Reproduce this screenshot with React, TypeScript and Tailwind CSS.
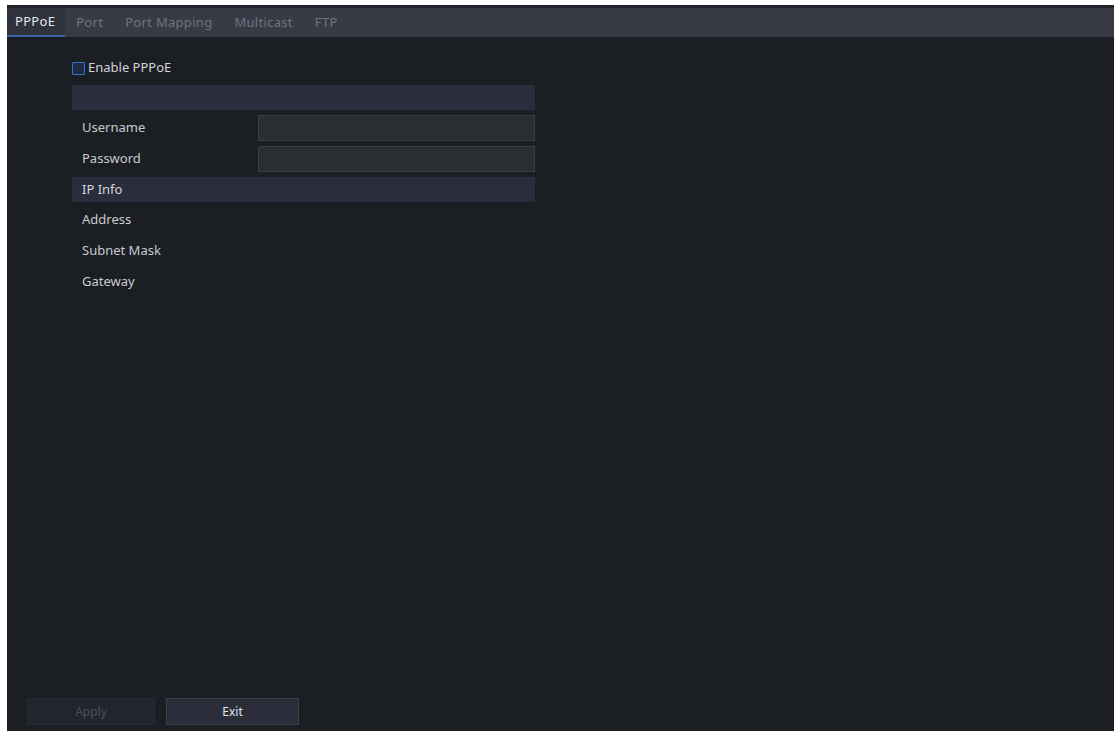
import React from "react"

const tabs = ["PPPoE", "Port", "Port Mapping", "Multicast", "FTP"]

const font = { fontFamily: '"Noto Sans", "DejaVu Sans", sans-serif' }

export default function App() {
  return (
    <div className="w-[1117px] h-[731px] bg-white pt-[5px] pl-[7px] pr-[3px] overflow-hidden" style={font}>
      <div className="h-full flex flex-col bg-[#1b1e22]">
        {/* tab bar */}
        <div className="h-[32px] shrink-0 flex items-stretch bg-[#383b46] border-t-[3px] border-[#202329] text-[13px] tracking-[0.3px]">
          {tabs.map((t, i) => (
            <div
              key={t}
              className={
                i === 0
                  ? "pl-[8px] pr-[10px] flex items-center text-[#e4e6ee] border-b-[2px] border-[#3b5fa8] bg-[#30333e]"
                  : "px-[11px] flex items-center text-[#6f7380]"
              }
            >
              {t}
            </div>
          ))}
        </div>

        {/* form */}
        <div className="flex-1 pl-[65px] pt-[23px]">
          <div className="w-[463px] text-[13px] text-[#c9cbd0]">
            <label className="flex items-center gap-[3px] h-[16px]">
              <span className="w-[13px] h-[13px] border-[1.5px] border-[#3a6fd0] bg-[#1e2b45] rounded-[1px]" />
              <span className="text-[#d2d4da]">Enable PPPoE</span>
            </label>

            <div className="mt-[9px] h-[25px] bg-[#2a2d3b]" />

            <div className="mt-[5px] h-[26px] flex items-center">
              <span className="w-[186px] pl-[10px]">Username</span>
              <div className="flex-1 h-full bg-[#2a2d31] border border-[#3a3d42]" />
            </div>
            <div className="mt-[5px] h-[26px] flex items-center">
              <span className="w-[186px] pl-[10px]">Password</span>
              <div className="flex-1 h-full bg-[#2a2d31] border border-[#3a3d42]" />
            </div>

            <div className="mt-[5px] h-[25px] bg-[#2a2d3b] flex items-center pl-[10px] text-[#d2d4da]">IP Info</div>

            <div className="mt-[2px]">
              {["Address", "Subnet Mask", "Gateway"].map((l) => (
                <div key={l} className="h-[31px] flex items-center pl-[10px]">
                  {l}
                </div>
              ))}
            </div>
          </div>
        </div>

        {/* buttons */}
        <div className="shrink-0 flex gap-[11px] pl-[20px] pb-[6px] text-[12px]">
          <div className="w-[128px] h-[27px] flex items-center justify-center bg-[#22252f] text-[#4a4e5a] border border-[#262a33]">Apply</div>
          <div className="w-[133px] h-[27px] flex items-center justify-center bg-[#2b2e3a] text-[#e4e6ee] border border-[#3c404c]">Exit</div>
        </div>
      </div>
    </div>
  )
}
